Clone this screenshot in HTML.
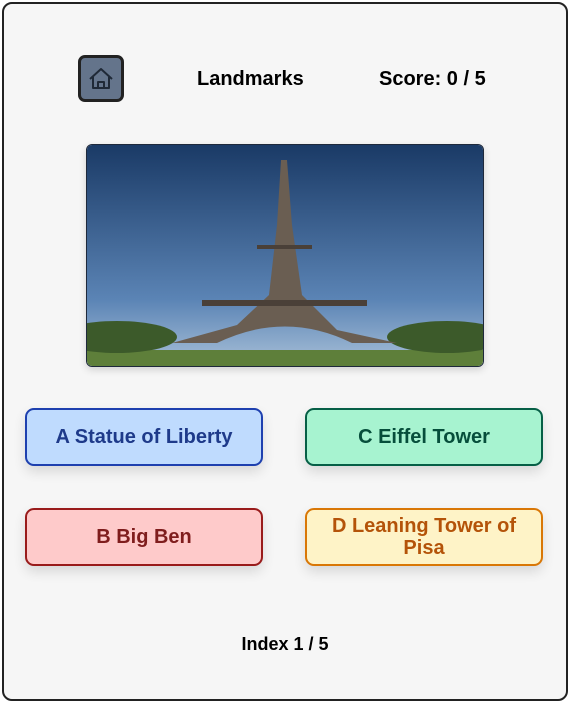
<!DOCTYPE html>
<html><head><style>
body{margin:0;width:570px;height:703px;background:#fff;font-family:"Liberation Sans",sans-serif;}
.card{position:absolute;left:2px;top:2px;width:562px;height:695px;border:2px solid #222;border-radius:10px;background:#f6f6f6;}
.home{position:absolute;left:78px;top:55px;width:40px;height:41px;background:#64748b;border:3px solid #222;border-radius:7px;}
.t{position:absolute;font-size:20px;color:#000;font-weight:bold;}
.img{position:absolute;left:86px;top:144px;width:396px;height:221px;border:1px solid #1e293b;border-radius:6px;overflow:hidden;box-shadow:0 3px 8px rgba(0,0,0,.15);}
.b{position:absolute;width:218px;padding:0 8px;height:54px;border:2px solid;border-radius:9px;display:flex;align-items:center;justify-content:center;text-align:center;font-size:20px;line-height:22px;font-weight:bold;box-shadow:0 6px 12px rgba(0,0,0,.12);box-sizing:content-box;}
</style></head><body>
<div class="card"></div>
<div class="home"><svg width="40" height="41" viewBox="0 0 40 41"><path d="M9 21 L20 11 L31 21 M12 19 V30 H28 V19 M17 30 V24 H23 V30" fill="none" stroke="#1f2937" stroke-width="2" stroke-linejoin="round"/></svg></div>
<div class="t" style="left:197px;top:68px">Landmarks</div>
<div class="t" style="left:379px;top:68px">Score: 0 / 5</div>
<div class="img"><svg width="396" height="221" viewBox="0 0 396 221">
<defs><linearGradient id="s" x1="0" y1="0" x2="0" y2="1"><stop offset="0" stop-color="#1a3a66"/><stop offset=".7" stop-color="#5b84b5"/><stop offset="1" stop-color="#a8c0d8"/></linearGradient></defs>
<rect width="396" height="221" fill="url(#s)"/>
<rect y="205" width="396" height="16" fill="#5e7f3a"/>
<ellipse cx="30" cy="192" rx="60" ry="16" fill="#3c5a2a"/>
<ellipse cx="360" cy="192" rx="60" ry="16" fill="#3c5a2a"/>
<path d="M194 15 L200 15 L205 80 L215 150 L250 185 L310 198 L265 198 Q198 165 130 198 L85 198 L150 180 L182 150 L190 80 Z" fill="#6a5e52"/>
<rect x="115" y="155" width="165" height="6" fill="#4a4038"/>
<rect x="170" y="100" width="55" height="4" fill="#4a4038"/>
</svg></div>
<div class="b" style="left:25px;top:408px;background:#bfdbfe;border-color:#1e40af;color:#1e3a8a">A Statue of Liberty</div>
<div class="b" style="left:305px;top:408px;background:#a7f3d0;border-color:#065f46;color:#064e3b">C Eiffel Tower</div>
<div class="b" style="left:25px;top:508px;background:#fecaca;border-color:#991b1b;color:#7f1d1d">B Big Ben</div>
<div class="b" style="left:305px;top:508px;background:#fef3c7;border-color:#d97706;color:#b45309">D Leaning Tower of Pisa</div>
<div class="t" style="left:0;width:570px;text-align:center;top:634px;font-size:18px">Index 1 / 5</div>
</body></html>
